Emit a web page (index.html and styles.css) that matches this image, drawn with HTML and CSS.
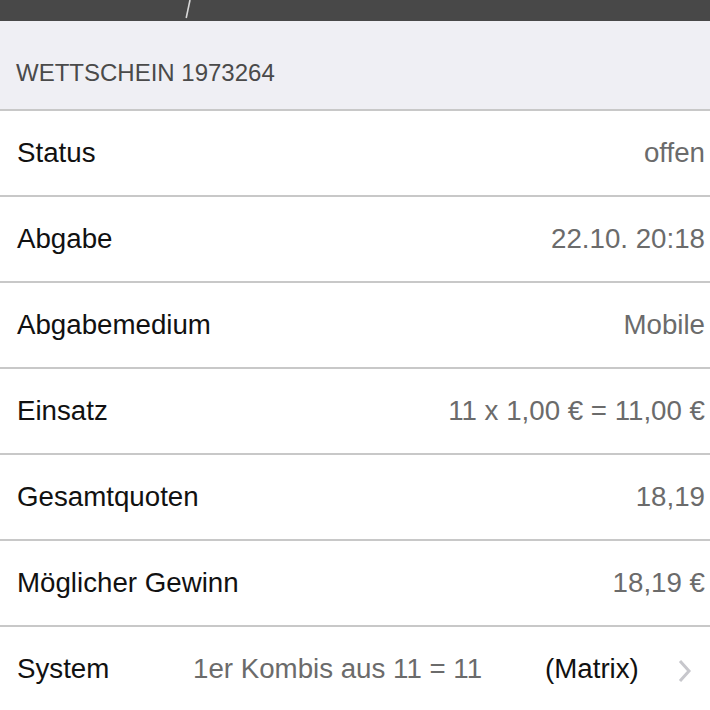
FILE: index.html
```html
<!DOCTYPE html>
<html lang="de">
<head>
<meta charset="utf-8">
<link rel="stylesheet" href="styles.css">
</head>
<body>
<div class="topbar">
  <svg class="slash" width="10" height="21" viewBox="0 0 10 21"><line x1="7" y1="0" x2="3.2" y2="18" stroke="#d8d8d8" stroke-width="1.6"/></svg>
</div>
<div class="section-header">WETTSCHEIN 1973264</div>
<div class="list">
  <div class="row"><span class="label">Status</span><span class="value">offen</span></div>
  <div class="row"><span class="label">Abgabe</span><span class="value">22.10. 20:18</span></div>
  <div class="row"><span class="label">Abgabemedium</span><span class="value">Mobile</span></div>
  <div class="row"><span class="label">Einsatz</span><span class="value">11 x 1,00 € = 11,00 €</span></div>
  <div class="row"><span class="label">Gesamtquoten</span><span class="value">18,19</span></div>
  <div class="row"><span class="label">Möglicher Gewinn</span><span class="value">18,19 €</span></div>
  <div class="row system">
    <span class="label sys-label">System</span>
    <span class="sys-value">1er Kombis aus 11 = 11</span>
    <span class="sys-type">(Matrix)</span>
    <svg class="chevron" width="14" height="24" viewBox="0 0 14 24"><polyline points="2,2 11,12 2,22" fill="none" stroke="#c7c7cc" stroke-width="3"/></svg>
  </div>
</div>
</body>
</html>
```
FILE: styles.css
```css
html, body {
  margin: 0;
  padding: 0;
  background: #ffffff;
  font-family: "Liberation Sans", Arial, Helvetica, sans-serif;
}
.topbar {
  height: 21px;
  background: #484848;
  padding-left: 183px;
  box-sizing: border-box;
}
.slash { display: block; }
.section-header {
  height: 73px;
  background: #efeff4;
  border-bottom: 2px solid #c8c8c8;
  display: flex;
  align-items: center;
  padding: 15px 16px 0 16px;
  font-size: 24px;
  color: #4a4a4a;
}
.row {
  height: 84px;
  border-bottom: 2px solid #c8c8c8;
  display: flex;
  align-items: center;
  justify-content: space-between;
  padding: 0 5px 0 17px;
}
.label {
  font-size: 27.7px;
  color: #111111;
}
.value {
  font-size: 27.7px;
  color: #6b6b6b;
}
.system { justify-content: flex-start; }
.sys-label { width: 176px; }
.sys-value {
  font-size: 27.7px;
  color: #6b6b6b;
  width: 352px;
}
.sys-type {
  font-size: 27.7px;
  color: #111111;
}
.chevron {
  margin-left: auto;
  margin-right: 13px;
  margin-top: 4px;
}
```
